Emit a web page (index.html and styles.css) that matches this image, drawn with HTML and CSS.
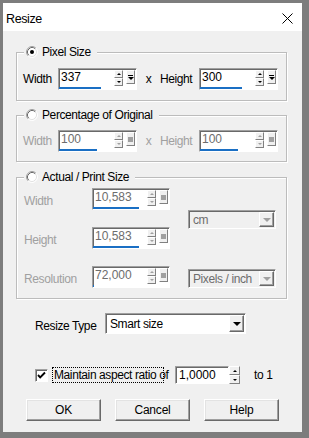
FILE: index.html
```html
<!DOCTYPE html>
<html lang="en">
<head>
    <meta charset="UTF-8">
    <meta name="viewport" content="width=device-width, initial-scale=1.0">
    <title>Resize</title>
    <link rel="stylesheet" href="styles.css">
</head>
<body>

<div class="dialog">
    <div class="titlebar">
        <span class="title">Resize</span>
        <svg class="close" width="11" height="11" viewBox="0 0 11 11"><path d="M0.5 0.5L10.5 10.5M10.5 0.5L0.5 10.5" stroke="#000" stroke-width="1" fill="none"/></svg>
    </div>

    <div class="content">
        <!-- Pixel size -->
        <div class="group group-pixel">
            <div class="legend">
                <svg class="radio" width="12" height="12" viewBox="0 0 12 12">
                    <circle cx="6" cy="6" r="5" fill="#fff"/>
                    <path d="M2.11 9.89A5.5 5.5 0 0 1 9.89 2.11" stroke="#a0a0a0" fill="none"/>
                    <path d="M9.89 2.11A5.5 5.5 0 0 1 2.11 9.89" stroke="#fff" fill="none"/>
                    <path d="M2.82 9.18A4.5 4.5 0 0 1 9.18 2.82" stroke="#696969" fill="none"/>
                    <path d="M9.18 2.82A4.5 4.5 0 0 1 2.82 9.18" stroke="#e3e3e3" fill="none"/>
                    <circle cx="6" cy="6" r="2" fill="#000"/>
                </svg>
                <span>Pixel Size</span>
            </div>
            <div class="size-row">
                <span class="lbl lbl-w">Width</span>
                <div class="spinfield">
                    <div class="val"><span>337</span><span class="bar" style="width: 42px"></span></div>
                    <div class="spin"><span class="sb up"></span><span class="sb down"></span></div>
                    <span class="end"></span>
                </div>
                <span class="times">x</span>
                <span class="lbl lbl-h">Height</span>
                <div class="spinfield">
                    <div class="val"><span>300</span><span class="bar" style="width: 42px"></span></div>
                    <div class="spin"><span class="sb up"></span><span class="sb down"></span></div>
                    <span class="end"></span>
                </div>
            </div>
        </div>

        <!-- Percentage -->
        <div class="group group-percent">
            <div class="legend">
                <svg class="radio" width="12" height="12" viewBox="0 0 12 12">
                    <circle cx="6" cy="6" r="5" fill="#fff"/>
                    <path d="M2.11 9.89A5.5 5.5 0 0 1 9.89 2.11" stroke="#a0a0a0" fill="none"/>
                    <path d="M9.89 2.11A5.5 5.5 0 0 1 2.11 9.89" stroke="#fff" fill="none"/>
                    <path d="M2.82 9.18A4.5 4.5 0 0 1 9.18 2.82" stroke="#696969" fill="none"/>
                    <path d="M9.18 2.82A4.5 4.5 0 0 1 2.82 9.18" stroke="#e3e3e3" fill="none"/>
                </svg>
                <span>Percentage of Original</span>
            </div>
            <div class="size-row off">
                <span class="lbl lbl-w">Width</span>
                <div class="spinfield">
                    <div class="val"><span>100</span><span class="bar" style="width: 38px"></span></div>
                    <div class="spin"><span class="sb up"></span><span class="sb down"></span></div>
                    <span class="end"></span>
                </div>
                <span class="times">x</span>
                <span class="lbl lbl-h">Height</span>
                <div class="spinfield">
                    <div class="val"><span>100</span><span class="bar" style="width: 38px"></span></div>
                    <div class="spin"><span class="sb up"></span><span class="sb down"></span></div>
                    <span class="end"></span>
                </div>
            </div>
        </div>

        <!-- Actual / print -->
        <div class="group group-print">
            <div class="legend">
                <svg class="radio" width="12" height="12" viewBox="0 0 12 12">
                    <circle cx="6" cy="6" r="5" fill="#fff"/>
                    <path d="M2.11 9.89A5.5 5.5 0 0 1 9.89 2.11" stroke="#a0a0a0" fill="none"/>
                    <path d="M9.89 2.11A5.5 5.5 0 0 1 2.11 9.89" stroke="#fff" fill="none"/>
                    <path d="M2.82 9.18A4.5 4.5 0 0 1 9.18 2.82" stroke="#696969" fill="none"/>
                    <path d="M9.18 2.82A4.5 4.5 0 0 1 2.82 9.18" stroke="#e3e3e3" fill="none"/>
                </svg>
                <span>Actual / Print Size</span>
            </div>
            <div class="print-body off">
                <div class="print-grid">
                    <div class="print-row">
                        <span class="lbl lbl-p">Width</span>
                        <div class="spinfield narrow">
                            <div class="val"><span>10,583</span><span class="bar" style="width: 46px"></span></div>
                            <div class="spin"><span class="sb up"></span><span class="sb down"></span></div>
                            <span class="end"></span>
                        </div>
                    </div>
                    <div class="print-row">
                        <span class="lbl lbl-p">Height</span>
                        <div class="spinfield narrow">
                            <div class="val"><span>10,583</span><span class="bar" style="width: 46px"></span></div>
                            <div class="spin"><span class="sb up"></span><span class="sb down"></span></div>
                            <span class="end"></span>
                        </div>
                    </div>
                    <div class="print-row">
                        <span class="lbl lbl-p">Resolution</span>
                        <div class="spinfield narrow">
                            <div class="val"><span>72,000</span><span class="bar" style="width: 1px"></span></div>
                            <div class="spin"><span class="sb up"></span><span class="sb down"></span></div>
                            <span class="end"></span>
                        </div>
                    </div>
                </div>
                <div class="print-combos">
                    <div class="combo combo-unit"><span class="txt">cm</span><span class="drop"></span></div>
                    <div class="combo combo-unit"><span class="txt">Pixels / inch</span><span class="drop"></span></div>
                </div>
            </div>
        </div>

        <div class="type-row">
            <span class="type-lbl">Resize Type</span>
            <div class="combo combo-type"><span class="txt">Smart size</span><span class="drop"></span></div>
        </div>

        <div class="aspect-row">
            <span class="check">
                <svg width="11" height="11" viewBox="0 0 11 11"><path d="M2 5L4.2 7.3L9 2.5" stroke="#000" stroke-width="1.9" fill="none"/></svg>
            </span>
            <span class="focus">Maintain aspect ratio of</span>
            <div class="aspect-field">
                <span class="box">1,0000</span>
                <div class="spin tall"><span class="sb up"></span><span class="sb down"></span></div>
            </div>
            <span class="to">to 1</span>
        </div>

        <div class="buttons">
            <button class="btn">OK</button>
            <button class="btn">Cancel</button>
            <button class="btn">Help</button>
        </div>
    </div>
</div>

</body>
</html>
```

FILE: styles.css
```css
body {
    margin: 0;
    padding: 0;
    background-color: #7d7d7d;
    font-family: "Liberation Sans", Arial, sans-serif;
    font-size: 12px;
    letter-spacing: -0.4px;
    color: #000;
}

.dialog {
    margin: 3px 0 0 3px;
    width: 299px;
    height: 429px;
    background: #f0f0f0;
    display: flex;
    flex-direction: column;
}

.titlebar {
    height: 28px;
    box-sizing: border-box;
    padding: 3px 9px 0 3px;
    background: #fff;
    display: flex;
    align-items: center;
    justify-content: space-between;
    flex-shrink: 0;
}

.title {
    font-size: 12.5px;
}

.content {
    display: flex;
    flex-direction: column;
    padding: 21px 15px 0 13px;
}

/* group boxes */
.group {
    box-sizing: border-box;
    border: 1px solid #bcbcbc;
    box-shadow: inset 1px 1px #fff, 1px 1px #fff;
    display: flex;
    flex-direction: column;
}

.group-pixel {
    height: 49px;
}

.group-percent {
    height: 47px;
    margin-top: 14px;
}

.group-print {
    height: 122px;
    margin-top: 15px;
}

.legend {
    align-self: flex-start;
    display: flex;
    align-items: center;
    gap: 4px;
    height: 14px;
    margin: -8px 0 0 7px;
    padding: 0 6px 0 2px;
    background: #f0f0f0;
}

.size-row {
    display: flex;
    align-items: center;
    padding-left: 6px;
    margin-top: 9px;
}

.group-percent .size-row {
    margin-top: 8px;
}

.lbl-w {
    width: 35px;
}

.lbl-h {
    width: 39px;
}

.times {
    width: 23px;
    text-align: center;
}

.off .lbl,
.off .times {
    color: #a0a0a0;
}

/* spin edit with slider bar */
.spinfield {
    display: flex;
    align-items: flex-start;
    width: 79px;
    height: 22px;
    box-sizing: border-box;
    background: #fff;
    border: 1px solid;
    border-color: #a0a0a0 #fff #fff #a0a0a0;
    box-shadow: inset 1px 1px #696969;
}

.spinfield.narrow {
    width: 78px;
}

.val {
    flex: 1;
    height: 100%;
    display: flex;
    flex-direction: column;
    padding: 1px 0 0 2px;
    line-height: 14px;
    letter-spacing: 0;
}

.off .val {
    color: #6d6d6d;
}

.bar {
    margin: auto 0 1px -2px;
    height: 2px;
    background: #1a6fc4;
}

.spin {
    display: flex;
    flex-direction: column;
    width: 9px;
    margin-top: 1px;
}

.sb {
    height: 8px;
    box-sizing: border-box;
    background: #f0f0f0;
    border: 1px solid;
    border-color: #fff #808080 #808080 #fff;
    display: flex;
    align-items: center;
    justify-content: center;
}

.sb::after {
    content: "";
    border-left: 2px solid transparent;
    border-right: 2px solid transparent;
}

.sb.up::after {
    border-bottom: 2px solid #000;
}

.sb.down::after {
    border-top: 2px solid #000;
}

.off .sb.up::after {
    border-bottom-color: #a0a0a0;
}

.off .sb.down::after {
    border-top-color: #a0a0a0;
}

.end {
    width: 9px;
    height: 14px;
    margin: 1px 1px 0 3px;
    box-sizing: border-box;
    background: #f0f0f0;
    border: 1px solid;
    border-color: #fff #808080 #808080 #fff;
    display: flex;
    flex-direction: column;
    align-items: center;
    justify-content: center;
    gap: 1px;
}

.end::before {
    content: "";
    width: 5px;
    height: 1px;
    background: #000;
}

.end::after {
    content: "";
    border-left: 3px solid transparent;
    border-right: 3px solid transparent;
    border-top: 3px solid #000;
}

.off .end::before {
    width: 5px;
    height: 5px;
    background: #a0a0a0;
}

.off .end::after {
    display: none;
}

/* print size block */
.print-body {
    display: flex;
    padding-left: 7px;
    margin-top: 4px;
}

.print-grid {
    display: flex;
    flex-direction: column;
    gap: 17px;
}

.print-row {
    display: flex;
    align-items: center;
}

.lbl-p {
    width: 68px;
    padding-top: 4px;
}

.print-combos {
    display: flex;
    flex-direction: column;
    gap: 40px;
    padding-top: 22px;
    margin-left: 18px;
}

/* combo boxes */
.combo {
    display: flex;
    align-items: center;
    box-sizing: border-box;
    padding: 1px;
    background: #fff;
    border: 1px solid;
    border-color: #a0a0a0 #fff #fff #a0a0a0;
    box-shadow: inset 1px 1px #696969;
}

.combo .txt {
    flex: 1;
    padding-left: 3px;
}

.combo-unit {
    width: 88px;
    height: 19px;
    background: #f0f0f0;
}

.combo-unit .txt {
    color: #6d6d6d;
}

.drop {
    width: 15px;
    height: 100%;
    box-sizing: border-box;
    background: #f0f0f0;
    border: 1px solid;
    border-color: #fff #696969 #696969 #fff;
    box-shadow: inset -1px -1px #a0a0a0;
    display: flex;
    align-items: center;
    justify-content: center;
}

.drop::after {
    content: "";
    border-left: 4px solid transparent;
    border-right: 4px solid transparent;
    border-top: 4px solid #000;
}

.combo-unit .drop::after {
    border-top-color: #a0a0a0;
}

.type-row {
    display: flex;
    align-items: center;
    margin: 14px 0 0 19px;
}

.type-lbl {
    width: 70px;
    padding-top: 5px;
}

.combo-type {
    width: 141px;
    height: 21px;
}

/* aspect ratio */
.aspect-row {
    display: flex;
    align-items: center;
    height: 18px;
    margin: 32px 0 0 19px;
}

.check {
    width: 13px;
    height: 13px;
    box-sizing: border-box;
    background: #fff;
    border: 1px solid;
    border-color: #a0a0a0 #fff #fff #a0a0a0;
    box-shadow: inset 1px 1px #696969;
    display: flex;
    align-items: center;
    justify-content: center;
}

.focus {
    margin-left: 4px;
    width: 112px;
    height: 16px;
    box-sizing: border-box;
    border: 1px dotted #000;
    line-height: 14px;
    padding-left: 1px;
    white-space: nowrap;
}

.aspect-field {
    display: flex;
    margin-left: 11px;
    height: 18px;
}

.aspect-field .box {
    width: 54px;
    box-sizing: border-box;
    background: #fff;
    border: 1px solid;
    border-color: #a0a0a0 #fff #fff #a0a0a0;
    box-shadow: inset 1px 1px #696969;
    padding: 1px 0 0 3px;
    line-height: 14px;
    letter-spacing: 0;
}

.spin.tall {
    width: 11px;
    margin-top: 0;
}

.spin.tall .sb {
    height: 9px;
}

.to {
    margin-left: 14px;
}

/* buttons */
.buttons {
    display: flex;
    gap: 14px;
    margin: 15px 0 0 10px;
}

.btn {
    width: 75px;
    height: 22px;
    box-sizing: border-box;
    padding: 0;
    font: inherit;
    letter-spacing: -0.2px;
    color: #000;
    background: #f0f0f0;
    border: 1px solid;
    border-color: #fff #696969 #696969 #fff;
    box-shadow: inset -1px -1px #a0a0a0, inset 1px 1px #e3e3e3;
}
```
